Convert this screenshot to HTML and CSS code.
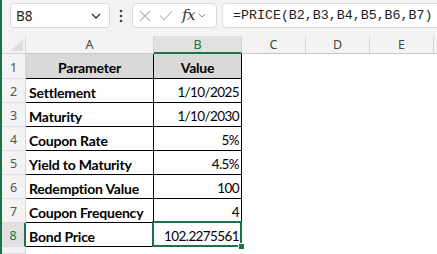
FILE: index.html
```html
<!DOCTYPE html>
<html lang="en">
<head>
    <meta charset="UTF-8">
    <title>Bond Price</title>
    <link rel="stylesheet" href="styles.css">
</head>
<body>
<div class="app">
    <div class="fbar">
        <div class="namebox">
            <span>B8</span>
            <svg class="chev" width="10" height="6" viewBox="0 0 10 6"><path d="M1 1 L5 5 L9 1" fill="none" stroke="#333" stroke-width="1.3"/></svg>
        </div>
        <svg class="dots" width="4" height="14" viewBox="0 0 4 14"><circle cx="2" cy="2" r="1.3" fill="#444"/><circle cx="2" cy="7" r="1.3" fill="#444"/><circle cx="2" cy="12" r="1.3" fill="#444"/></svg>
        <div class="fxbox">
            <svg width="12" height="12" viewBox="0 0 12 12"><path d="M1 1 L11 11 M11 1 L1 11" stroke="#b4b4b4" stroke-width="1.1"/></svg>
            <svg width="14" height="11" viewBox="0 0 14 11"><path d="M1 5.5 L5 10 L13 1" fill="none" stroke="#b4b4b4" stroke-width="1.1"/></svg>
            <span class="fx">fx</span>
            <svg width="8" height="5" viewBox="0 0 8 5"><path d="M1 1 L4 4 L7 1" fill="none" stroke="#888" stroke-width="1"/></svg>
        </div>
        <div class="formula">=PRICE(B2,B3,B4,B5,B6,B7)</div>
    </div>

    <div class="sheet">
        <div class="corner"><svg width="12" height="12" viewBox="0 0 12 12"><path d="M12 0 L12 12 L0 12 Z" fill="#dcdcdc"/></svg></div>
        <div class="colh">A</div>
        <div class="colh sel">B</div>
        <div class="colh">C</div>
        <div class="colh">D</div>
        <div class="colh">E</div>
        <div class="colh last"></div>

        <div class="rowh">1</div>
        <div class="c t head">Parameter</div>
        <div class="c t head">Value</div>
        <div class="c"></div><div class="c"></div><div class="c"></div><div class="c"></div>

        <div class="rowh">2</div>
        <div class="c t lbl">Settlement</div>
        <div class="c t num">1/10/2025</div>
        <div class="c"></div><div class="c"></div><div class="c"></div><div class="c"></div>

        <div class="rowh">3</div>
        <div class="c t lbl">Maturity</div>
        <div class="c t num">1/10/2030</div>
        <div class="c"></div><div class="c"></div><div class="c"></div><div class="c"></div>

        <div class="rowh">4</div>
        <div class="c t lbl">Coupon Rate</div>
        <div class="c t num">5%</div>
        <div class="c"></div><div class="c"></div><div class="c"></div><div class="c"></div>

        <div class="rowh">5</div>
        <div class="c t lbl">Yield to Maturity</div>
        <div class="c t num">4.5%</div>
        <div class="c"></div><div class="c"></div><div class="c"></div><div class="c"></div>

        <div class="rowh">6</div>
        <div class="c t lbl">Redemption Value</div>
        <div class="c t num">100</div>
        <div class="c"></div><div class="c"></div><div class="c"></div><div class="c"></div>

        <div class="rowh">7</div>
        <div class="c t lbl">Coupon Frequency</div>
        <div class="c t num">4</div>
        <div class="c"></div><div class="c"></div><div class="c"></div><div class="c"></div>

        <div class="rowh sel">8</div>
        <div class="c t lbl">Bond Price</div>
        <div class="c t num active">102.2275561<span class="handle"></span></div>
        <div class="c"></div><div class="c"></div><div class="c"></div><div class="c"></div>

        <div class="rowh"></div>
        <div class="c"></div><div class="c"></div><div class="c"></div><div class="c"></div><div class="c"></div><div class="c"></div>
    </div>
</div>
</body>
</html>
```

FILE: styles.css
```css
html, body { margin: 0; padding: 0; }
body { width: 437px; height: 254px; overflow: hidden; background: #fff; }
.app { height: 254px; border-left: 2px solid #1e7145; box-sizing: border-box; display: flex; flex-direction: column; }

.fbar { height: 36px; box-sizing: border-box; padding: 3px 0 0 8px; background: #f3f3f3; display: flex; align-items: flex-start; }
.namebox { width: 100px; height: 25px; box-sizing: border-box; background: #fff; border: 1px solid #dadada; border-radius: 4px; display: flex; align-items: center; justify-content: space-between; padding: 0 8px 0 5px; font-family: "Noto Sans", sans-serif; font-size: 13.5px; color: #222; }
.dots { margin: 6px 0 0 9px; }
.fxbox { width: 85px; height: 25px; box-sizing: border-box; margin-left: 9px; background: #fff; border: 1px solid #dadada; border-radius: 4px; display: flex; align-items: center; padding: 0 4px 0 6px; }
.fxbox svg:nth-child(2) { margin-left: 8px; }
.fx { font-family: "DejaVu Serif", serif; font-style: italic; font-size: 15px; color: #333; margin: 0 3px 2px 9px; letter-spacing: -0.5px; }
.formula { flex: 1; height: 25px; box-sizing: border-box; margin-left: 5px; background: #fff; border: 1px solid #dadada; border-right: none; border-radius: 4px 0 0 4px; padding: 2px 0 0 10px; font-family: "Liberation Mono", monospace; font-size: 13.3px; line-height: 20px; color: #222; white-space: nowrap; overflow: hidden; }

.sheet { flex: 1; display: grid; grid-template-columns: 24px 128px 88px 64px 64px 64px 1fr; grid-template-rows: 18px 25px repeat(7, 24px) 1fr; }
.corner { background: #f3f3f3; border-right: 1px solid #d4d4d4; border-bottom: 1px solid #d4d4d4; display: flex; align-items: flex-end; justify-content: flex-end; padding: 0 2px 2px 0; box-sizing: border-box; }
.colh { background: #f3f3f3; border-right: 1px solid #d4d4d4; border-bottom: 1px solid #c8c8c8; font-family: "Noto Sans", sans-serif; font-size: 12.5px; color: #444; text-align: center; line-height: 17px; box-sizing: border-box; }
.colh.sel { background: #e1e1e1; color: #1e7145; border-bottom: 2px solid #1e7145; }
.colh.last { border-right: none; }
.rowh { background: #f3f3f3; border-right: 1px solid #d4d4d4; border-bottom: 1px solid #dedede; font-family: "Noto Sans", sans-serif; font-size: 12.5px; color: #555; text-align: center; display: flex; align-items: center; justify-content: center; padding-top: 2px; box-sizing: border-box; }
.rowh.sel { background: #e1e1e1; color: #1e7145; border-right: 2px solid #1e7145; }

.c { box-sizing: border-box; font-family: Lato, "Noto Sans", sans-serif; font-size: 14px; letter-spacing: -0.2px; color: #000; display: flex; align-items: center; padding-top: 3px; white-space: nowrap; }
.t { border-right: 1px solid #000; border-bottom: 1px solid #000; }
.head { background: #d9d9d9; font-weight: bold; justify-content: center; }
.lbl { font-weight: bold; padding-left: 3px; }
.num { justify-content: flex-end; padding-right: 2px; font-size: 13.5px; letter-spacing: -0.6px; }
.active { position: relative; }
.active::after { content: ""; position: absolute; left: -2px; top: -2px; right: -1px; bottom: -1px; border: 2px solid #1e7145; }
.handle { position: absolute; right: -4px; bottom: -4px; width: 5px; height: 5px; background: #1e7145; border: 1px solid #fff; z-index: 2; }
```
